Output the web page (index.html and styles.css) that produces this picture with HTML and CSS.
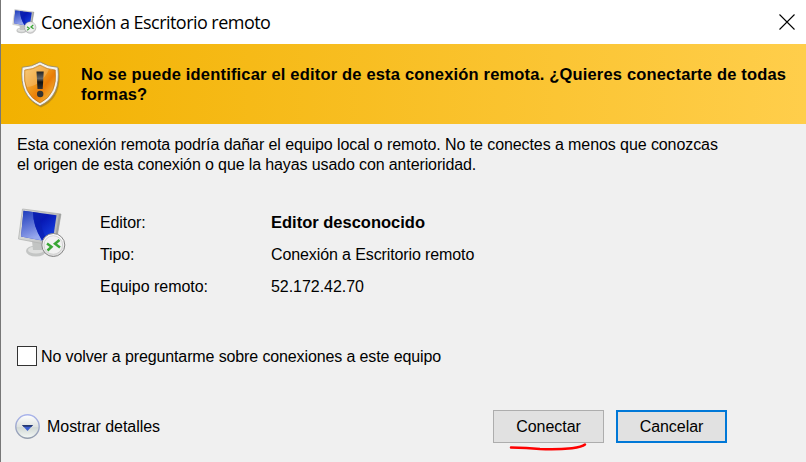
FILE: index.html
```html
<!DOCTYPE html>
<html lang="es">
<head>
<meta charset="utf-8">
<title>Conexión a Escritorio remoto</title>
<link rel="stylesheet" href="styles.css">
</head>
<body>
<svg class="defs" width="0" height="0" aria-hidden="true">
  <defs>
    <linearGradient id="screen" x1="0" y1="0" x2="1" y2="1">
      <stop offset="0" stop-color="#1733a8"/><stop offset=".45" stop-color="#0718b4"/><stop offset="1" stop-color="#1c50f0"/>
    </linearGradient>
    <linearGradient id="shine" x1="0" y1="0" x2="0.3" y2="1">
      <stop offset="0" stop-color="#1c3cc0"/><stop offset="1" stop-color="#b9c8f8"/>
    </linearGradient>
    <linearGradient id="frame" x1="0" y1="0" x2="1" y2="0">
      <stop offset="0" stop-color="#d9dad9"/><stop offset="1" stop-color="#b4b5b4"/>
    </linearGradient>
    <linearGradient id="badge" x1="0" y1="0" x2="0" y2="1">
      <stop offset="0" stop-color="#fff"/><stop offset="1" stop-color="#dcdcdc"/>
    </linearGradient>
    <symbol id="remote" viewBox="0 0 48 50">
      <ellipse cx="18" cy="43" rx="10" ry="5.500" fill="#c3c5c4"/>
      <ellipse cx="18" cy="42" rx="8" ry="3.600" fill="#dfe0df"/>
      <path d="M14 33h11l-1 9h-9z" fill="#c2c4c3"/>
      <path d="M4.500 1 43 6 37.500 38 .5 31z" fill="url(#frame)" stroke="#b3b4b3" stroke-width=".8"/>
      <path d="M41 6 43 6 37.500 38 36 37z" fill="#9fa19f"/>
      <path d="M5.500 2.800 38.500 7.200 34.500 34.500 3 28.500z" fill="url(#screen)"/>
      <path d="M5.500 2.800 15 4.100Q15 18 24 32.500L3 28.500z" fill="url(#shine)" opacity=".8"/>
      <path d="M15 4.100 21 4.900Q23 22 30 33.600L24 32.500Q15 18 15 4.100z" fill="#0a20b0" opacity=".7"/>
      <circle cx="35.300" cy="37" r="11.500" fill="url(#badge)" stroke="#868686" stroke-width="1"/>
      <circle cx="35.300" cy="37" r="9.300" fill="#f1f1f1" stroke="#c9c9c9" stroke-width=".8"/>
      <path d="M29 35.500 33.500 38.800 29.500 42.500M41.500 32 37 35.800 42 39.500" fill="none" stroke="#39a635" stroke-width="2.500"/>
    </symbol>
  </defs>
</svg>
<main class="dialog">
  <header class="titlebar">
    <svg class="titlebar-icon"><use href="#remote"/></svg>
    <h1 class="titlebar-text">Conexión a Escritorio remoto</h1>
    <svg class="close" viewBox="0 0 16 16"><path d="M.5.5l15 15M15.500.5l-15 15" stroke="#000" stroke-width="1.100"/></svg>
  </header>
  <section class="warning">
    <svg class="shield" viewBox="0 0 40 48">
      <defs>
        <linearGradient id="sh" x1="0" y1="0" x2="1" y2="1">
          <stop offset="0" stop-color="#f7c05c"/><stop offset=".45" stop-color="#ee9418"/><stop offset=".6" stop-color="#e97c08"/><stop offset="1" stop-color="#fbcf4d"/>
        </linearGradient>
        <linearGradient id="ex" x1="0" y1="0" x2="0" y2="1">
          <stop offset="0" stop-color="#222"/><stop offset=".4" stop-color="#666"/><stop offset=".6" stop-color="#111"/><stop offset="1" stop-color="#333"/>
        </linearGradient>
      </defs>
      <path d="M20 2Q28 7 38 7Q42 37 20 46.500Q-1 37 1.500 7Q11 7 20 2z" fill="#9b7422" opacity=".6"/>
      <path d="M19 1Q27 6 36.800 6.300Q40.500 35 19 44.800Q-2 35 1.200 6.300Q11 6 19 1z" fill="#f5f3ee" stroke="#8d8777" stroke-width=".8"/>
      <path d="M19 4Q26 8.500 34.300 9Q37 33 19 42Q1 33 3.700 9Q12 8.500 19 4z" fill="url(#sh)" stroke="#b56b10" stroke-width=".6"/>
      <path d="M19 4.800Q12 9.300 4.400 9.800Q3.500 20 6 26Q20 25 28 8.500Q23 7.300 19 4.800z" fill="#fff" opacity=".2"/>
      <path d="M15.500 10.500h7.200l-1 17.500h-5.200z" fill="url(#ex)"/>
      <circle cx="19.200" cy="33" r="3.200" fill="#333"/>
    </svg>
    <p class="warning-text">No se puede identificar el editor de esta conexión remota. ¿Quieres conectarte de todas<br>formas?</p>
  </section>
  <p class="intro"><span class="intro-first">Esta conexión remota podría dañar el equipo local o remoto. No te conectes a menos que conozcas</span><br><span>el origen de esta conexión o que la hayas usado con anterioridad.</span></p>
  <section class="details">
    <svg class="details-icon"><use href="#remote"/></svg>
    <dl class="facts">
      <dt>Editor:</dt><dd class="publisher">Editor desconocido</dd>
      <dt>Tipo:</dt><dd>Conexión a Escritorio remoto</dd>
      <dt class="host">Equipo remoto:</dt><dd class="host">52.172.42.70</dd>
    </dl>
  </section>
  <label class="remember"><span class="box"></span><span class="remember-text">No volver a preguntarme sobre conexiones a este equipo</span></label>
  <footer class="footer">
    <svg class="expander" viewBox="0 0 26 26">
      <defs><linearGradient id="eg" x1="0" y1="0" x2="0" y2="1"><stop offset="0" stop-color="#fff"/><stop offset=".5" stop-color="#dfe3e1"/><stop offset=".55" stop-color="#d2d9d6"/><stop offset="1" stop-color="#f4f8f6"/></linearGradient>
      <linearGradient id="er" x1="0" y1="0" x2="0" y2="1"><stop offset="0" stop-color="#a9b4ec"/><stop offset="1" stop-color="#939dac"/></linearGradient></defs>
      <circle cx="12.500" cy="12.500" r="11.700" fill="url(#eg)" stroke="url(#er)" stroke-width="1.400"/>
      <path d="M7 11h11l-5.500 6z" fill="#3c5fd0"/><path d="M7 11h11l-1.500 1.800h-8z" fill="#26396f"/>
    </svg>
    <span class="expander-text">Mostrar detalles</span>
    <button class="button connect">Conectar
      <svg class="stroke" viewBox="0 0 80 12"><path d="M2 6.600Q18 6.800 31 8Q47 9 63 7.200Q73 6 76 3.500" fill="none" stroke="#f00" stroke-width="2.500" stroke-linecap="round"/></svg>
    </button>
    <button class="button cancel">Cancelar</button>
  </footer>
</main>
</body>
</html>
```
FILE: styles.css
```css
* { box-sizing: border-box; }
body {
  margin: 0;
  font: 16px/20px "Liberation Sans", Arial, sans-serif;
  letter-spacing: -.11px;
  color: #000;
  background: #f0f0f0;
}
.defs { position: absolute; }
p, h1, dl, dd { margin: 0; }
p, span, h1, dt, dd { white-space: nowrap; }
.dialog {
  width: 806px;
  height: 462px;
  overflow: hidden;
  border-left: 1px solid #777;
  background: #f0f0f0;
}
.titlebar {
  display: flex;
  align-items: center;
  height: 44px;
  padding: 0 11px;
  background: #fff;
}
.titlebar-icon { width: 25px; height: 25px; margin-top: -1px; }
.titlebar-text {
  flex: 1;
  margin: -1px 0 0 4px;
  font: 400 18px/24px "Open Sans", "Noto Sans", sans-serif;
  letter-spacing: -.54px;
}
.close { width: 16px; height: 16px; }
.warning {
  display: flex;
  height: 80px;
  padding: 17px 0 0 20px;
  background: linear-gradient(90deg, #f2b100, #ffce4b);
}
.shield { width: 40px; height: 48px; }
.warning-text {
  margin: 3px 0 0 20px;
  font-size: 16.5px;
  font-weight: 700;
  letter-spacing: .18px;
}
.intro { padding: 11px 0 0 16px; letter-spacing: -.12px; }
.intro-first { letter-spacing: -.085px; }
.details { display: flex; padding: 33px 0 0 17px; }
.details-icon { width: 48px; height: 50px; }
.facts {
  display: grid;
  grid-template-columns: 171px auto;
  row-gap: 12px;
  margin: 5px 0 0 34px;
}
.publisher { margin-top: -1px; font-size: 16.5px; font-weight: 700; letter-spacing: 0; }
.host { letter-spacing: -.04px; }
.remember {
  display: flex;
  align-items: center;
  gap: 4px;
  height: 20px;
  margin: 49px 0 0 16px;
}
.remember-text { padding-top: 2px; letter-spacing: -.12px; }
.box { width: 20px; height: 20px; border: 1px solid #333; background: #fff; }
.footer { display: flex; align-items: center; height: 34px; margin: 43px 79px 0 14px; }
.expander { width: 26px; height: 26px; margin-top: 2px; }
.expander-text { margin-left: 6px; padding-top: 1px; flex: 1; letter-spacing: -.05px; }
.button {
  position: relative;
  width: 111px;
  height: 33px;
  padding: 1px 0 0;
  border: 1px solid #adadad;
  background: #e1e1e1;
  color: #000;
  font: inherit;
  letter-spacing: -.05px;
}
.cancel { margin-left: 12px; border: 2px solid #0078d7; }
.stroke { position: absolute; left: 15px; top: 30px; width: 80px; height: 12px; }
```
